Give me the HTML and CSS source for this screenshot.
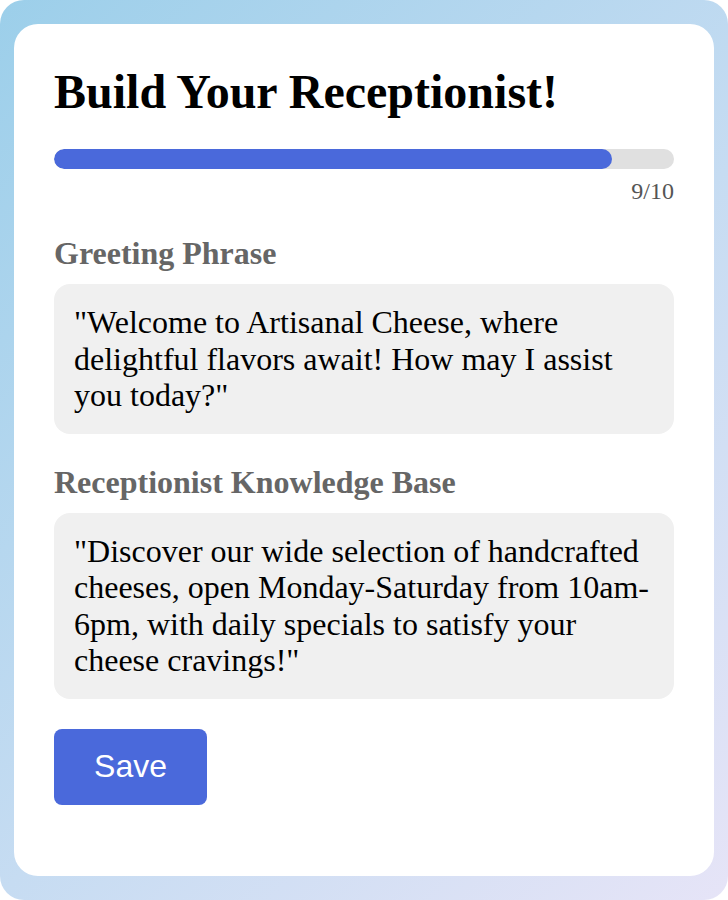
FILE: index.html
```html
<!DOCTYPE html>
<html>
<head>
<meta charset="utf-8">
<link rel="stylesheet" href="styles.css">
</head>
<body>
<div class="frame">
  <div class="card">
    <h1 class="title">Build Your Receptionist!</h1>
    <div class="progress"><div class="progress-fill" style="width: 90%"></div></div>
    <div class="step">9/10</div>
    <h2 class="label">Greeting Phrase</h2>
    <div class="box">"Welcome to Artisanal Cheese, where delightful flavors await! How may I assist you today?"</div>
    <h2 class="label">Receptionist Knowledge Base</h2>
    <div class="box">"Discover our wide selection of handcrafted cheeses, open Monday-Saturday from 10am-6pm, with daily specials to satisfy your cheese cravings!"</div>
    <button class="save">Save</button>
  </div>
</div>
</body>
</html>
```
FILE: styles.css
```css
html, body { margin: 0; padding: 0; background: #fff; }
body { font-family: "Liberation Serif", "Times New Roman", serif; }
.frame {
  box-sizing: border-box;
  height: 900px;
  padding: 24px 14px;
  border-radius: 24px;
  background: linear-gradient(135deg, #9ccfea 0%, #c6dcf2 55%, #e6e4f7 100%);
}
.card {
  box-sizing: border-box;
  height: 852px;
  background: #fff;
  border-radius: 24px;
  padding: 40px;
}
.title {
  margin: 0;
  font-size: 48px;
  font-weight: bold;
  color: #000;
  line-height: 55px;
  white-space: nowrap;
}
.progress {
  margin-top: 30px;
  height: 20px;
  border-radius: 10px;
  background: #e0e0e0;
  overflow: hidden;
}
.progress-fill {
  height: 100%;
  background: #4a69db;
  border-radius: 10px;
}
.step {
  text-align: right;
  font-size: 24px;
  line-height: 28px;
  color: #555;
  margin-top: 8px;
}
.label {
  margin: 30px 0 12px;
  font-size: 32px;
  font-weight: bold;
  color: #666;
  line-height: 37px;
}
.box {
  background: #f0f0f0;
  border-radius: 16px;
  padding: 20px;
  font-size: 32px;
  line-height: 36.5px;
  color: #000;
}
.save {
  display: block;
  margin-top: 30px;
  width: 153px;
  height: 76px;
  border: none;
  border-radius: 8px;
  background: #4a69db;
  color: #fff;
  font-family: "Liberation Sans", Arial, sans-serif;
  font-size: 32px;
}
```
